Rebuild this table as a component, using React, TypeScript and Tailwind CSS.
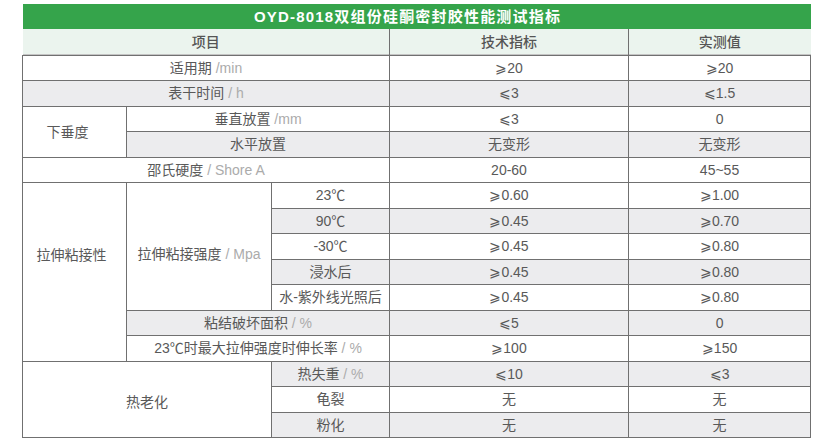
import type { ReactNode } from "react";

const cellBase =
  "border border-[#707070] text-center align-middle p-0 text-[14px] leading-none text-[#595959]";

function Unit({ children }: { children: ReactNode }) {
  return <span className="text-[#ababab]">{children}</span>;
}

type CellProps = {
  children?: ReactNode;
  gray?: boolean;
  colSpan?: number;
  rowSpan?: number;
  className?: string;
};

function Td({ children, gray, colSpan, rowSpan, className = "" }: CellProps) {
  return (
    <td
      colSpan={colSpan}
      rowSpan={rowSpan}
      className={`${cellBase} ${gray ? "bg-[#ececee]" : "bg-white"} ${className}`}
    >
      {children}
    </td>
  );
}

const rowH = "h-[25.5px]";
const headCell =
  "p-0 text-center align-middle text-[14px] font-medium leading-none text-[#555] shadow-[inset_0_-1px_0_#c4c4c4]";

export default function App() {
  return (
    <div className="min-h-[445px] w-[832px] bg-white pt-[4px] font-['Liberation_Sans','Noto_Sans_CJK_SC',sans-serif]">
      <table className="ml-[22px] w-[788px] table-fixed border-collapse">
        <colgroup>
          <col className="w-[104px]" />
          <col className="w-[145px]" />
          <col className="w-[118px]" />
          <col className="w-[239px]" />
          <col className="w-[182px]" />
        </colgroup>
        <tbody>
          <tr className="h-[25px]">
            <td
              colSpan={5}
              className="bg-[#35a44b] p-0 pr-[18px] text-center align-middle text-[15px] font-bold leading-none tracking-[1.2px] text-white"
            >
              OYD-8018双组份硅酮密封胶性能测试指标
            </td>
          </tr>
          <tr className="h-[26px] bg-[#ebf4ee]">
            <td colSpan={3} className={`${headCell} border-r border-[#707070]`}>
              项目
            </td>
            <td className={`${headCell} border-r border-[#707070]`}>技术指标</td>
            <td className={headCell}>实测值</td>
          </tr>

          <tr className={rowH}>
            <Td colSpan={3}>
              适用期 <Unit>/min</Unit>
            </Td>
            <Td>⩾20</Td>
            <Td>⩾20</Td>
          </tr>
          <tr className={rowH}>
            <Td colSpan={3} gray>
              表干时间 <Unit>/ h</Unit>
            </Td>
            <Td gray>⩽3</Td>
            <Td gray>⩽1.5</Td>
          </tr>

          {/* 下垂度 */}
          <tr className={rowH}>
            <Td rowSpan={2} className="pr-[14px]">
              下垂度
            </Td>
            <Td colSpan={2}>
              垂直放置 <Unit>/mm</Unit>
            </Td>
            <Td>⩽3</Td>
            <Td>0</Td>
          </tr>
          <tr className={rowH}>
            <Td colSpan={2} gray>
              水平放置
            </Td>
            <Td gray>无变形</Td>
            <Td gray>无变形</Td>
          </tr>

          <tr className={rowH}>
            <Td colSpan={3}>
              邵氏硬度 <Unit>/ Shore A</Unit>
            </Td>
            <Td>20-60</Td>
            <Td>45~55</Td>
          </tr>

          {/* 拉伸粘接性 */}
          <tr className={rowH}>
            <Td rowSpan={7} className="pr-[6px] pb-[34px]">
              拉伸粘接性
            </Td>
            <Td rowSpan={5} className="pt-[16px]">
              拉伸粘接强度 <Unit>/ Mpa</Unit>
            </Td>
            <Td>23℃</Td>
            <Td>⩾0.60</Td>
            <Td>⩾1.00</Td>
          </tr>
          <tr className={rowH}>
            <Td gray>90℃</Td>
            <Td gray>⩾0.45</Td>
            <Td gray>⩾0.70</Td>
          </tr>
          <tr className={rowH}>
            <Td>-30℃</Td>
            <Td>⩾0.45</Td>
            <Td>⩾0.80</Td>
          </tr>
          <tr className={rowH}>
            <Td gray>浸水后</Td>
            <Td gray>⩾0.45</Td>
            <Td gray>⩾0.80</Td>
          </tr>
          <tr className={rowH}>
            <Td>水-紫外线光照后</Td>
            <Td>⩾0.45</Td>
            <Td>⩾0.80</Td>
          </tr>
          <tr className={rowH}>
            <Td colSpan={2} gray>
              粘结破坏面积 <Unit>/ %</Unit>
            </Td>
            <Td gray>⩽5</Td>
            <Td gray>0</Td>
          </tr>
          <tr className={rowH}>
            <Td colSpan={2}>
              23℃时最大拉伸强度时伸长率 <Unit>/ %</Unit>
            </Td>
            <Td>⩾100</Td>
            <Td>⩾150</Td>
          </tr>

          {/* 热老化 */}
          <tr className={rowH}>
            <Td colSpan={2} rowSpan={3} className="pt-[5px]">
              热老化
            </Td>
            <Td gray>
              热失重 <Unit>/ %</Unit>
            </Td>
            <Td gray>⩽10</Td>
            <Td gray>⩽3</Td>
          </tr>
          <tr className={rowH}>
            <Td>龟裂</Td>
            <Td>无</Td>
            <Td>无</Td>
          </tr>
          <tr className={rowH}>
            <Td gray>粉化</Td>
            <Td gray>无</Td>
            <Td gray>无</Td>
          </tr>
        </tbody>
      </table>
    </div>
  );
}
